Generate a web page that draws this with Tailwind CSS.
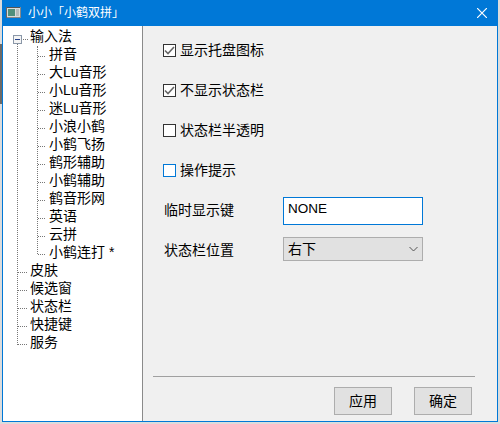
<!doctype html>
<html>
<head>
<meta charset="utf-8">
<script src="https://cdn.jsdelivr.net/npm/@tailwindcss/browser@4"></script>
</head>
<body class="relative w-[500px] h-[424px] overflow-hidden bg-[#dcdcdc] font-['Liberation_Sans','Noto_Sans_CJK_SC',sans-serif] text-[14px] leading-[18px] text-black">
<div class="absolute left-0 top-[44px] w-[2px] h-[60px] bg-[#6e6a66]"></div>
<div class="ml-[2px] w-[496px] h-[422px] border-x border-b border-[#0078d7] bg-[#f0f0f0] flex flex-col">
  <div class="h-[26px] shrink-0 bg-[#0078d7] flex items-center text-white text-[12px]">
    <svg class="ml-[3px] mr-[7px] -mt-[1px]" width="15" height="11" viewBox="0 0 15 11">
      <rect width="15" height="11" fill="#d8dcdc"/>
      <rect x="0" y="0" width="15" height="1" fill="#555"/>
      <rect x="0" y="10" width="15" height="1" fill="#888"/>
      <rect x="0" y="0" width="1" height="11" fill="#666"/>
      <rect x="14" y="0" width="1" height="11" fill="#888"/>
      <rect x="2" y="2" width="7" height="7" fill="#4f8f7c"/>
      <rect x="10" y="2" width="3" height="7" fill="#b4bcbc"/>
    </svg>
    <span>小小「小鹤双拼」</span>
    <svg class="ml-auto mr-[10px]" width="10" height="10" viewBox="0 0 10 10"><path d="M0 0L10 10M10 0L0 10" stroke="#fff" stroke-width="1.2"/></svg>
  </div>
  <div class="flex-1 flex min-h-0">
    <div class="w-[140px] shrink-0 bg-white border-r border-[#8a8a8a] pt-[1px] relative">
      <div class="absolute left-[14px] top-[18px] h-[301px] w-0 border-l border-dotted border-[#777]"></div>
      <div class="absolute left-[34px] top-[20px] h-[208px] w-0 border-l border-dotted border-[#777]"></div>
      <div class="absolute left-[10px] top-[9px] w-[9px] h-[9px] border border-[#8a97a8] bg-[#f4f4f4] flex items-center justify-center"><div class="w-[5px] h-px bg-[#24408a]"></div></div>
      <div class="flex flex-col">
        <div class="h-[18px] flex items-center"><span class="ml-[20px] w-[5px] mt-[6px] border-t border-dotted border-[#777]"></span><span class="ml-[2px]">输入法</span></div>
        <div class="flex flex-col">
          <div class="h-[18px] flex items-center"><span class="ml-[35px] w-[7px] mt-[4px] border-t border-dotted border-[#777]"></span><span class="ml-[4px]">拼音</span></div>
          <div class="h-[18px] flex items-center"><span class="ml-[35px] w-[7px] mt-[4px] border-t border-dotted border-[#777]"></span><span class="ml-[4px]">大Lu音形</span></div>
          <div class="h-[18px] flex items-center"><span class="ml-[35px] w-[7px] mt-[4px] border-t border-dotted border-[#777]"></span><span class="ml-[4px]">小Lu音形</span></div>
          <div class="h-[18px] flex items-center"><span class="ml-[35px] w-[7px] mt-[4px] border-t border-dotted border-[#777]"></span><span class="ml-[4px]">迷Lu音形</span></div>
          <div class="h-[18px] flex items-center"><span class="ml-[35px] w-[7px] mt-[4px] border-t border-dotted border-[#777]"></span><span class="ml-[4px]">小浪小鹤</span></div>
          <div class="h-[18px] flex items-center"><span class="ml-[35px] w-[7px] mt-[4px] border-t border-dotted border-[#777]"></span><span class="ml-[4px]">小鹤飞扬</span></div>
          <div class="h-[18px] flex items-center"><span class="ml-[35px] w-[7px] mt-[4px] border-t border-dotted border-[#777]"></span><span class="ml-[4px]">鹤形辅助</span></div>
          <div class="h-[18px] flex items-center"><span class="ml-[35px] w-[7px] mt-[4px] border-t border-dotted border-[#777]"></span><span class="ml-[4px]">小鹤辅助</span></div>
          <div class="h-[18px] flex items-center"><span class="ml-[35px] w-[7px] mt-[4px] border-t border-dotted border-[#777]"></span><span class="ml-[4px]">鹤音形网</span></div>
          <div class="h-[18px] flex items-center"><span class="ml-[35px] w-[7px] mt-[4px] border-t border-dotted border-[#777]"></span><span class="ml-[4px]">英语</span></div>
          <div class="h-[18px] flex items-center"><span class="ml-[35px] w-[7px] mt-[4px] border-t border-dotted border-[#777]"></span><span class="ml-[4px]">云拼</span></div>
          <div class="h-[18px] flex items-center"><span class="ml-[35px] w-[7px] mt-[4px] border-t border-dotted border-[#777]"></span><span class="ml-[4px]">小鹤连打 *</span></div>
        </div>
        <div class="h-[18px] flex items-center"><span class="ml-[15px] w-[9px] mt-[4px] border-t border-dotted border-[#777]"></span><span class="ml-[3px]">皮肤</span></div>
        <div class="h-[18px] flex items-center"><span class="ml-[15px] w-[9px] mt-[4px] border-t border-dotted border-[#777]"></span><span class="ml-[3px]">候选窗</span></div>
        <div class="h-[18px] flex items-center"><span class="ml-[15px] w-[9px] mt-[4px] border-t border-dotted border-[#777]"></span><span class="ml-[3px]">状态栏</span></div>
        <div class="h-[18px] flex items-center"><span class="ml-[15px] w-[9px] mt-[4px] border-t border-dotted border-[#777]"></span><span class="ml-[3px]">快捷键</span></div>
        <div class="h-[18px] flex items-center"><span class="ml-[15px] w-[9px] mt-[4px] border-t border-dotted border-[#777]"></span><span class="ml-[3px]">服务</span></div>
      </div>
    </div>
    <div class="flex-1 flex flex-col pl-[20px] pr-[22px] pt-[15px]">
      <div class="flex flex-col gap-[22px]">
        <div class="h-[18px] flex items-center gap-[4px]">
          <span class="w-[13px] h-[13px] border border-[#333] bg-white flex items-center justify-center"><svg width="11" height="11" viewBox="0 0 11 11"><path d="M1 5.5L4 8.5L10 2" fill="none" stroke="#666" stroke-width="1.6"/></svg></span>
          <span>显示托盘图标</span>
        </div>
        <div class="h-[18px] flex items-center gap-[4px]">
          <span class="w-[13px] h-[13px] border border-[#333] bg-white flex items-center justify-center"><svg width="11" height="11" viewBox="0 0 11 11"><path d="M1 5.5L4 8.5L10 2" fill="none" stroke="#666" stroke-width="1.6"/></svg></span>
          <span>不显示状态栏</span>
        </div>
        <div class="h-[18px] flex items-center gap-[4px]">
          <span class="w-[13px] h-[13px] border border-[#333] bg-white"></span>
          <span>状态栏半透明</span>
        </div>
        <div class="h-[18px] flex items-center gap-[4px]">
          <span class="w-[13px] h-[13px] border border-[#0078d7] bg-white"></span>
          <span>操作提示</span>
        </div>
      </div>
      <div class="mt-[18px] flex items-center">
        <span class="w-[120px] pl-[1px] -mt-[2px]">临时显示键</span>
        <div class="w-[140px] h-[28px] border border-[#0078d7] bg-white pl-[4px] pt-[2px] text-[13.5px]">NONE</div>
      </div>
      <div class="mt-[12px] flex items-center">
        <span class="w-[120px] pl-[1px] mt-[1px]">状态栏位置</span>
        <div class="w-[140px] h-[24px] border border-[#adadad] bg-[#e1e1e1] pl-[4px] flex items-center justify-between">
          <span>右下</span>
          <svg class="mr-[4px]" width="9" height="6" viewBox="0 0 9 6"><path d="M0.5 1L4.5 5L8.5 1" fill="none" stroke="#555"/></svg>
        </div>
      </div>
      <div class="mt-auto -ml-[10px] border-t border-[#a0a0a0]"></div>
      <div class="h-[44px] shrink-0 flex items-start justify-end gap-[22px] pr-[3px] pt-[10px]">
        <div class="w-[58px] h-[28px] border border-[#adadad] bg-[#e1e1e1] flex items-center justify-center">应用</div>
        <div class="w-[58px] h-[28px] border border-[#adadad] bg-[#e1e1e1] flex items-center justify-center">确定</div>
      </div>
    </div>
  </div>
</div>
</body>
</html>
